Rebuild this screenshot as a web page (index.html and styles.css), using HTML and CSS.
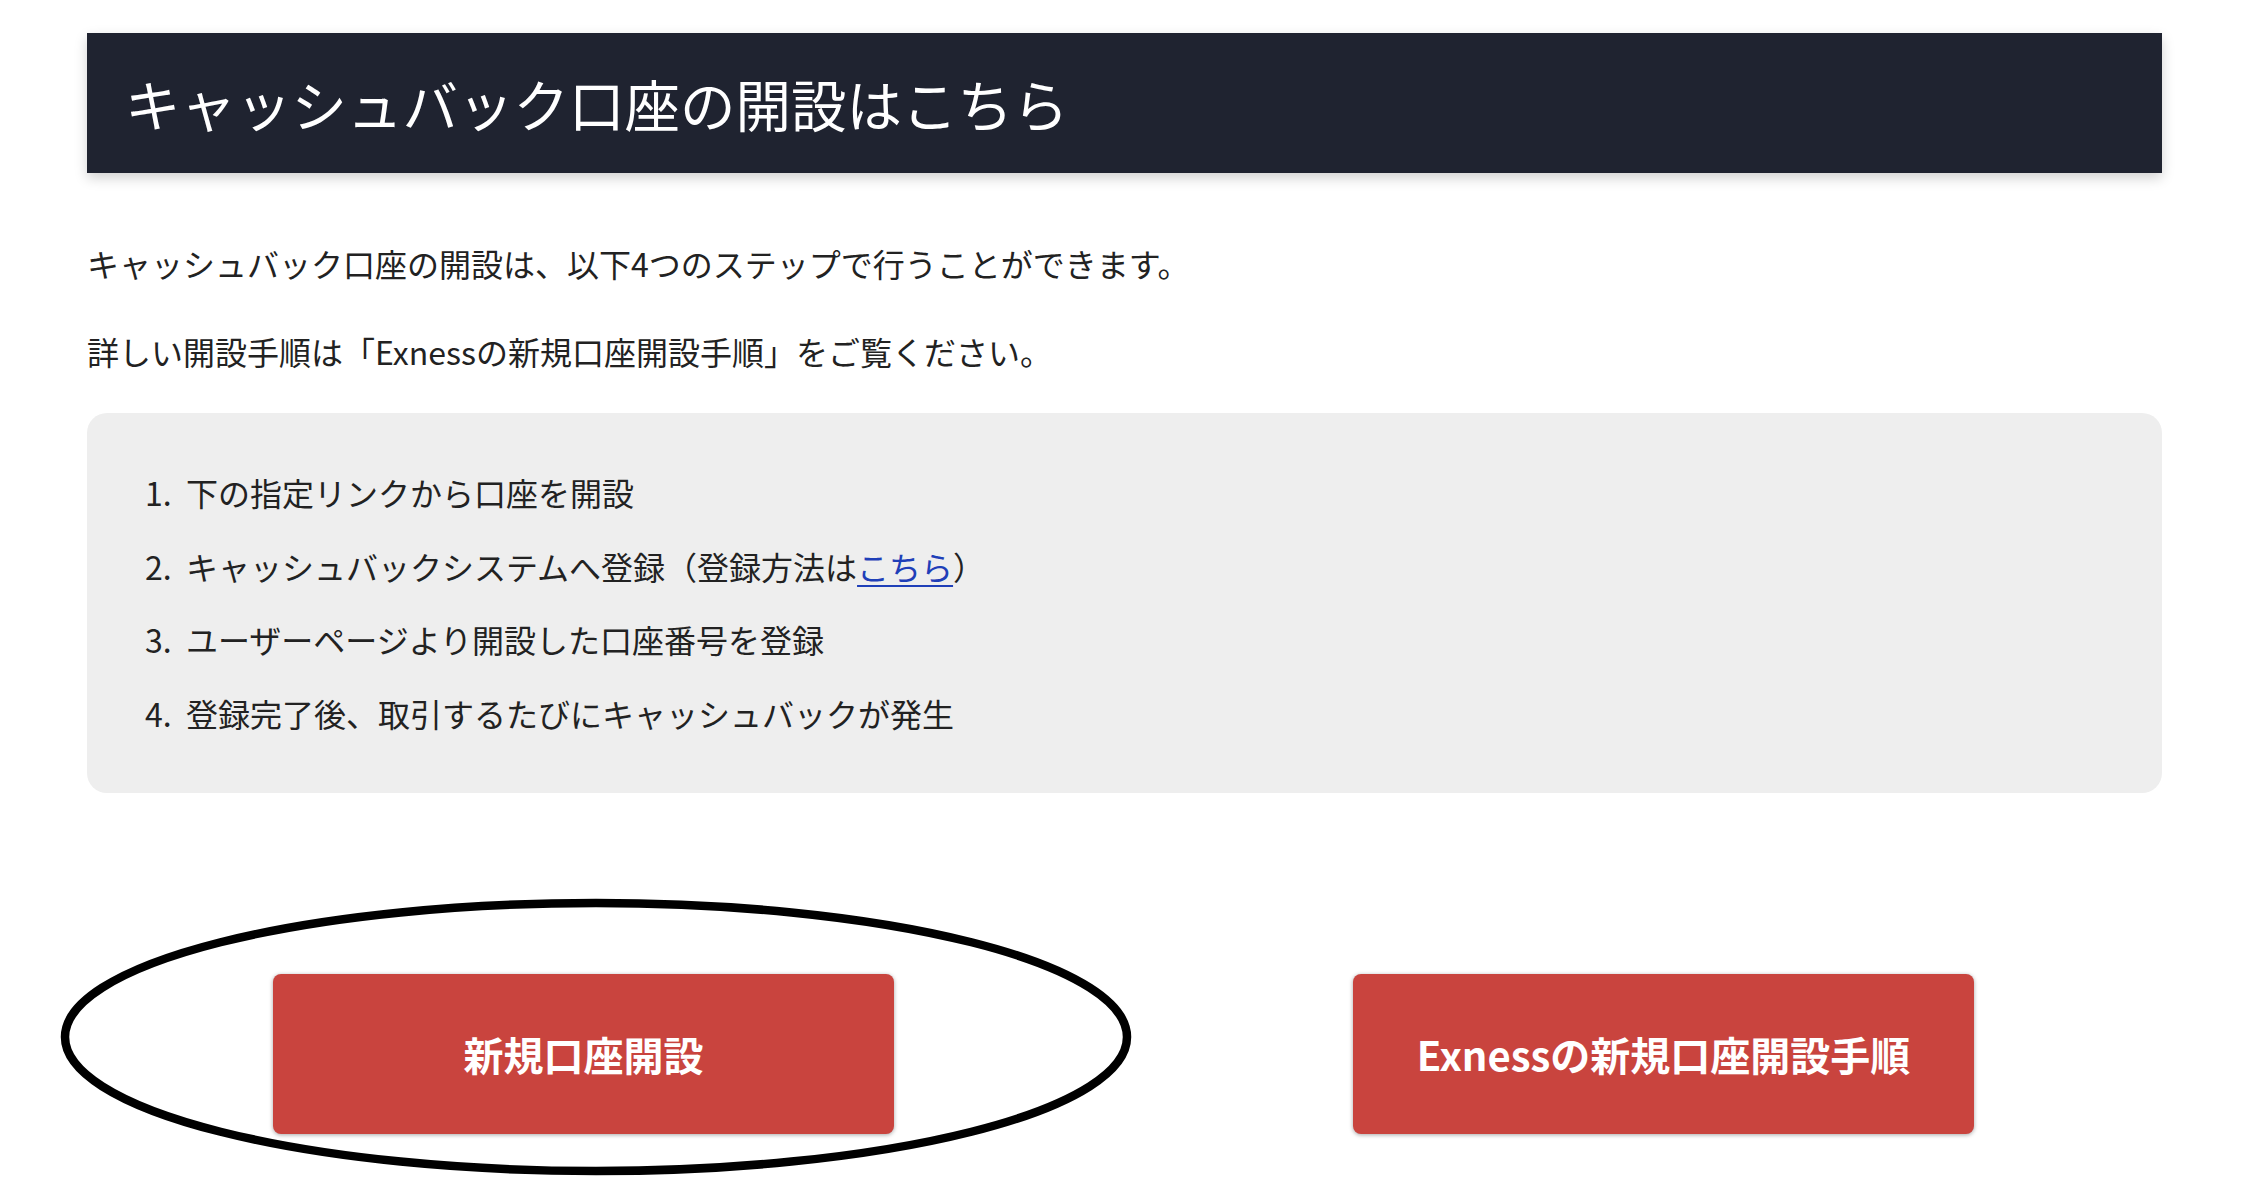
FILE: index.html
```html
<!DOCTYPE html>
<html lang="ja">
<head>
<meta charset="utf-8">
<title>キャッシュバック口座の開設はこちら</title>
<link rel="stylesheet" href="styles.css">
</head>
<body>
<div class="page">
  <h2 class="title-bar">キャッシュバック口座の開設はこちら</h2>
  <p class="lead">キャッシュバック口座の開設は、以下4つのステップで行うことができます。</p>
  <p class="lead">詳しい開設手順は「Exnessの新規口座開設手順」をご覧ください。</p>
  <div class="steps">
    <ol class="step-list">
      <li><span class="num">1.</span>下の指定リンクから口座を開設</li>
      <li><span class="num">2.</span>キャッシュバックシステムへ登録（登録方法は<a href="#" class="link">こちら</a>）</li>
      <li><span class="num">3.</span>ユーザーページより開設した口座番号を登録</li>
      <li><span class="num">4.</span>登録完了後、取引するたびにキャッシュバックが発生</li>
    </ol>
  </div>
  <div class="buttons">
    <a href="#" class="btn">新規口座開設</a>
    <a href="#" class="btn">Exnessの新規口座開設手順</a>
  </div>
</div>
<svg class="circle-mark" width="1080" height="284" viewBox="0 0 1080 284">
  <ellipse cx="540" cy="142" rx="531" ry="134" fill="none" stroke="#000" stroke-width="8.5"/>
</svg>
</body>
</html>
```
FILE: styles.css
```css
html, body {
  margin: 0;
  padding: 0;
  background: #ffffff;
}
body {
  position: relative;
  font-family: "Noto Sans CJK JP", "Noto Sans", sans-serif;
  color: #222222;
  width: 2264px;
  height: 1190px;
  overflow: hidden;
}
.page {
  width: 2075px;
  padding: 33px 0 0 87px;
}
.title-bar {
  margin: 0;
  height: 140px;
  box-sizing: border-box;
  display: flex;
  align-items: center;
  padding-left: 38px;
  background: #1f2330;
  color: #ffffff;
  font-size: 55.5px;
  font-weight: 400;
  letter-spacing: 0;
  box-shadow: 0 5px 12px rgba(0, 0, 0, 0.18);
}
.lead {
  margin: 0;
  font-size: 32px;
  line-height: 44px;
}
.title-bar + .lead {
  margin-top: 68px;
}
.lead + .lead {
  margin-top: 44px;
}
.steps {
  margin-top: 40px;
  height: 380px;
  box-sizing: border-box;
  background: #eeeeee;
  border-radius: 20px;
  padding: 57px 0 0 58px;
}
.step-list {
  list-style: none;
  margin: 0;
  padding: 0;
  display: flex;
  flex-direction: column;
  gap: 29.5px;
  font-size: 32px;
  line-height: 44px;
}
.step-list li {
  display: flex;
}
.num {
  display: inline-block;
  width: 41px;
}
.link {
  color: #1f3fb8;
  text-decoration: underline;
  text-underline-offset: 5px;
  text-decoration-thickness: 2px;
}
.buttons {
  margin-top: 181px;
  display: flex;
  justify-content: space-between;
  padding: 0 188px 0 186px;
}
.btn {
  width: 621px;
  height: 160px;
  display: flex;
  align-items: center;
  justify-content: center;
  background: #c9443e;
  color: #ffffff;
  font-size: 40px;
  font-weight: 700;
  text-decoration: none;
  border-radius: 8px;
  box-shadow: 0 1px 4px rgba(0, 0, 0, 0.35);
}
.circle-mark {
  position: absolute;
  left: 56px;
  top: 895px;
  pointer-events: none;
}
```
